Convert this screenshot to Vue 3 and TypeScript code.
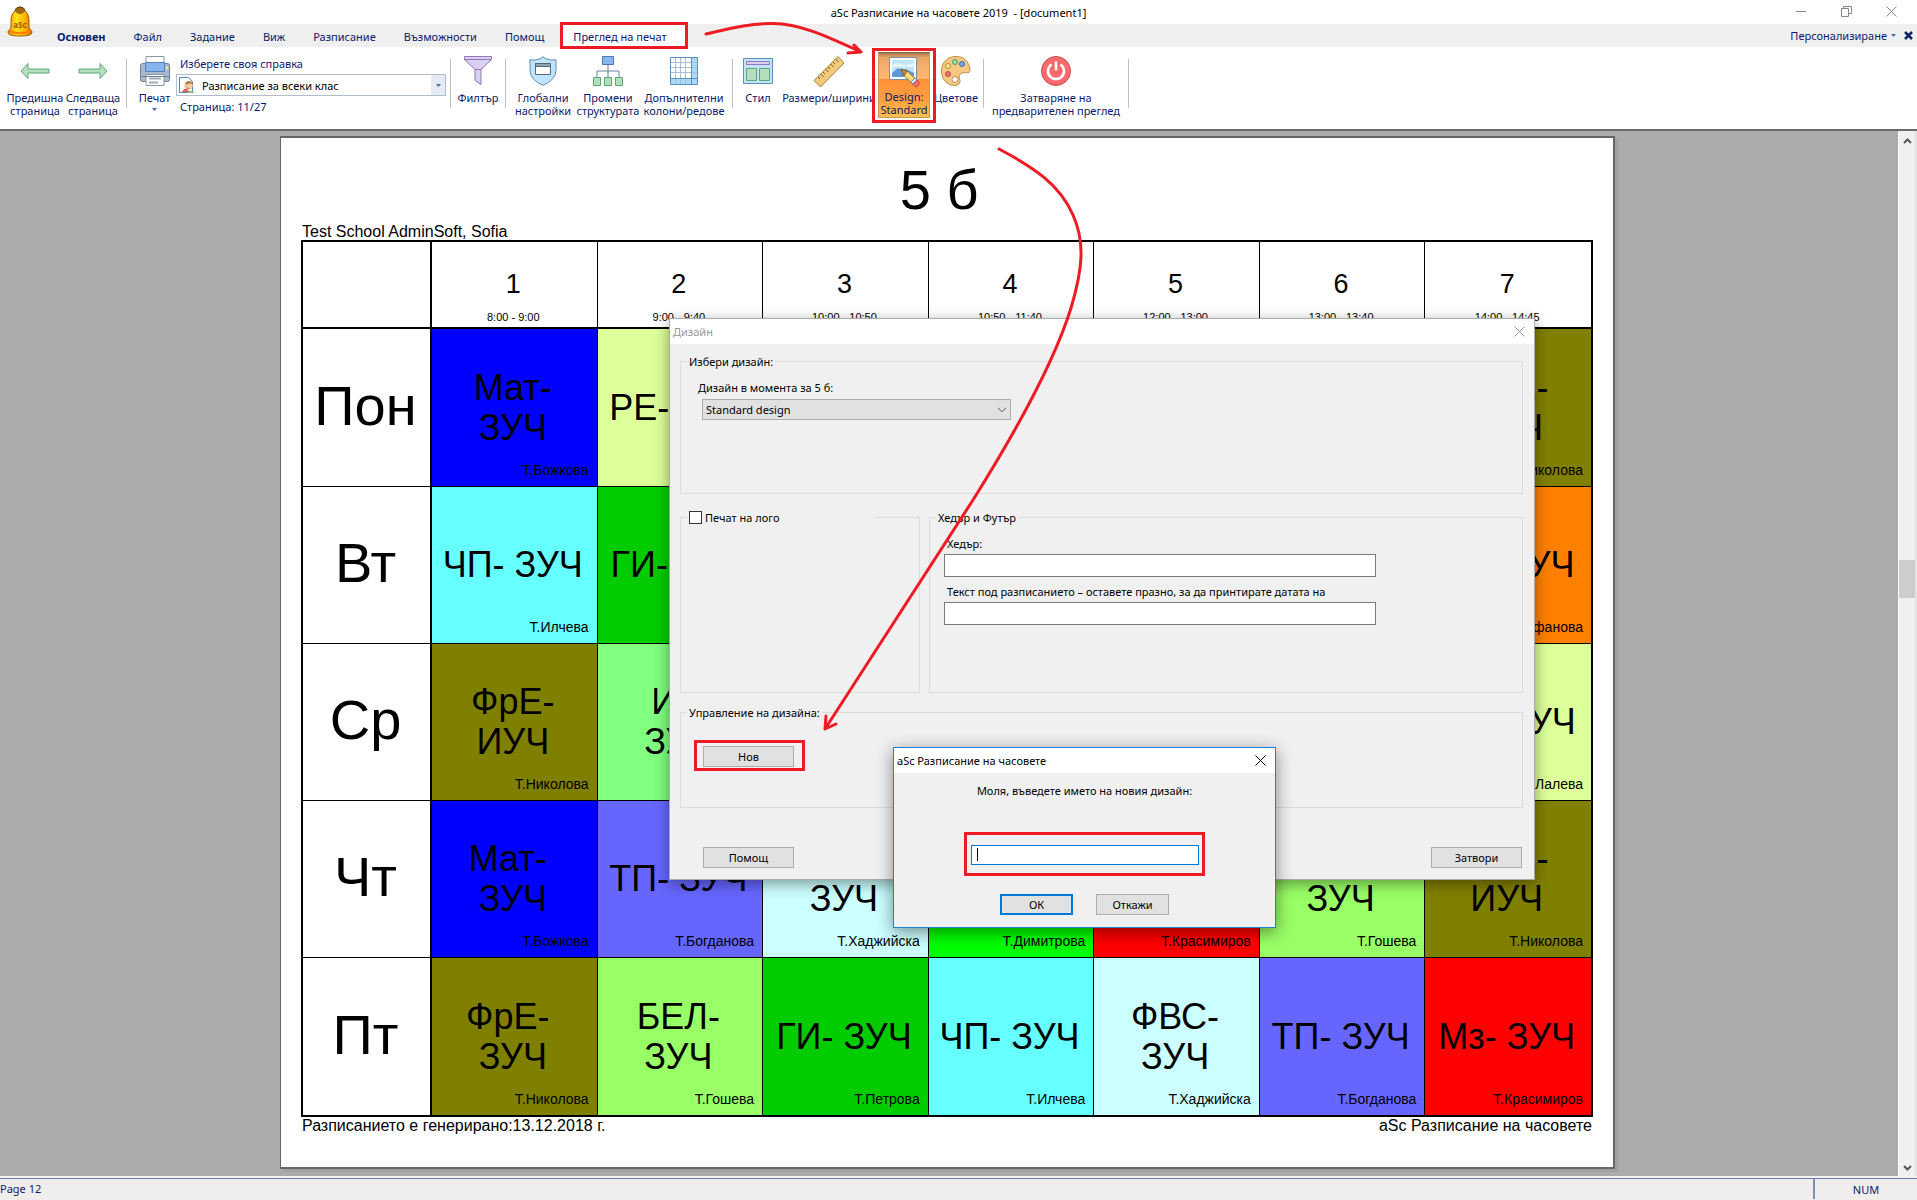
<script setup lang="ts">
import { ref } from 'vue'

interface Lesson {
  lines: string[]
  teacher: string
  color: string
}

interface Day {
  name: string
  lessons: Lesson[]
}

const menu = ['Основен', 'Файл', 'Задание', 'Виж', 'Разписание', 'Възможности', 'Помощ', 'Преглед на печат']

const periods = [
  { no: 1, time: '8:00 - 9:00' },
  { no: 2, time: '9:00 - 9:40' },
  { no: 3, time: '10:00 - 10:50' },
  { no: 4, time: '10:50 - 11:40' },
  { no: 5, time: '12:00 - 13:00' },
  { no: 6, time: '13:00 - 13:40' },
  { no: 7, time: '14:00 - 14:45' },
]

const lesson = (text: string, teacher: string, color: string): Lesson => ({
  lines: text.split('|'),
  teacher,
  color,
})
const free = (): Lesson => lesson('', '', '#ffffff')

const days: Day[] = [
  {
    name: 'Пон',
    lessons: [
      lesson('Мат-|ЗУЧ', 'Т.Божкова', '#0000ff'),
      lesson('РЕ- ЗУЧ', '', '#ddff99'),
      free(), free(), free(), free(),
      lesson('ФрЕ-|ИУЧ', 'Т.Николова', '#808000'),
    ],
  },
  {
    name: 'Вт',
    lessons: [
      lesson('ЧП- ЗУЧ', 'Т.Илчева', '#66ffff'),
      lesson('ГИ- ЗУЧ', '', '#00cc00'),
      free(), free(), free(), free(),
      lesson('ГИ- ЗУЧ', 'Т.Стефанова', '#ff8000'),
    ],
  },
  {
    name: 'Ср',
    lessons: [
      lesson('ФрЕ-|ИУЧ', 'Т.Николова', '#808000'),
      lesson('Из-|ЗУЧ', '', '#80ff80'),
      free(), free(), free(), free(),
      lesson('РЕ- ЗУЧ', 'Т.Лалева', '#ddff99'),
    ],
  },
  {
    name: 'Чт',
    lessons: [
      lesson('Мат-\u00a0|ЗУЧ', 'Т.Божкова', '#0000ff'),
      lesson('ТП- ЗУЧ', 'Т.Богданова', '#6666ff'),
      lesson('ФВС-|ЗУЧ', 'Т.Хаджийска', '#ccffff'),
      lesson('', 'Т.Димитрова', '#00ff00'),
      lesson('', 'Т.Красимиров', '#ff0000'),
      lesson('БЕЛ-|ЗУЧ', 'Т.Гошева', '#99ff66'),
      lesson('ФрЕ-|ИУЧ', 'Т.Николова', '#808000'),
    ],
  },
  {
    name: 'Пт',
    lessons: [
      lesson('ФрЕ-\u00a0|ЗУЧ', 'Т.Николова', '#808000'),
      lesson('БЕЛ-|ЗУЧ', 'Т.Гошева', '#99ff66'),
      lesson('ГИ- ЗУЧ', 'Т.Петрова', '#00cc00'),
      lesson('ЧП- ЗУЧ', 'Т.Илчева', '#66ffff'),
      lesson('ФВС-|ЗУЧ', 'Т.Хаджийска', '#ccffff'),
      lesson('ТП- ЗУЧ', 'Т.Богданова', '#6666ff'),
      lesson('Мз- ЗУЧ', 'Т.Красимиров', '#ff0000'),
    ],
  },
]

const printLogo = ref(false)
const header = ref('')
const footer = ref('')
const designName = ref('')
</script>

<template>
  <div class="app">
    <header class="titlebar">
      <svg class="bell" width="28" height="32" viewBox="0 0 28 32" aria-hidden="true">
        <defs>
          <linearGradient id="bellGold" x1="0" x2="1">
            <stop offset="0" stop-color="#f08c00" />
            <stop offset="0.35" stop-color="#ffe21a" />
            <stop offset="0.7" stop-color="#ffb400" />
            <stop offset="1" stop-color="#c86400" />
          </linearGradient>
        </defs>
        <ellipse cx="14" cy="28" rx="12" ry="2" fill="#bbb" />
        <ellipse cx="14" cy="5" rx="5" ry="4" fill="#8a5a10" stroke="#5c3a06" />
        <path d="M14 4C7 4 5 9 5 15v6c0 2-3 3-3 5 0 3 5 4 12 4s12-1 12-4c0-2-3-3-3-5v-6c0-6-2-11-9-11z" fill="url(#bellGold)" stroke="#a85a00" />
        <ellipse cx="14" cy="5" rx="4" ry="3" fill="#a06a14" />
        <path d="M3 25c6 3 16 3 22 0" fill="none" stroke="#ff7a00" stroke-width="2" />
        <text x="14" y="22" text-anchor="middle" font-size="8" font-weight="bold" fill="#a85a10">aSc</text>
      </svg>
      <h1>aSc Разписание на часовете 2019&nbsp; - [document1]</h1>
      <div class="winbuttons">
        <button type="button" aria-label="Minimize">
          <svg width="11" height="11" viewBox="0 0 11 11"><path d="M0 5.500h10" stroke="#888" /></svg>
        </button>
        <button type="button" aria-label="Restore">
          <svg width="11" height="11" viewBox="0 0 11 11" fill="none" stroke="#888"><path d="M.5 2.500h7v8h-7zM2.500 2.500v-2h8v7h-3" /></svg>
        </button>
        <button type="button" aria-label="Close">
          <svg width="11" height="11" viewBox="0 0 11 11"><path d="M.5.5l10 10M10.500.5l-10 10" stroke="#888" /></svg>
        </button>
      </div>
    </header>

    <nav class="menubar">
      <a v-for="(item, i) in menu" :key="item" href="#" :class="{ first: i === 0, current: i === menu.length - 1 }">{{ item }}</a>
      <button type="button" class="customize">
        Персонализиране<svg width="5" height="3" viewBox="0 0 5 3"><path d="M0 0h5L2.500 3z" fill="#3d72b8" /></svg>
      </button>
      <button type="button" class="close-doc" aria-label="Close document">
        <svg width="9" height="9" viewBox="0 0 9 9"><path d="M1 1l7 7M8 1L1 8" stroke="#0a246a" stroke-width="2.500" /></svg>
      </button>
    </nav>

    <div class="ribbon">
      <section class="group nav-group">
        <button type="button" class="tool w-page">
          <svg width="30" height="30" viewBox="0 0 30 30"><path d="M1 15L8 7.500V13H29V17H8V22.500Z" fill="#b5dfba" stroke="#5fa577" /></svg>
          <span>Предишна<br />страница</span>
        </button>
        <button type="button" class="tool w-page">
          <svg width="30" height="30" viewBox="0 0 30 30"><path d="M29 15L22 7.500V13H1V17H22V22.500Z" fill="#b5dfba" stroke="#5fa577" /></svg>
          <span>Следваща<br />страница</span>
        </button>
      </section>
      <section class="group print-group">
        <button type="button" class="tool w-print">
          <svg width="30" height="30" viewBox="0 0 30 30">
            <path d="M6 .5h18v10H6z" fill="#fff" stroke="#8a97a8" />
            <path d="M2.500 7.500H6v7h18v-7h3.500q2 0 2 2v14q0 2-2 2h-25q-2 0-2-2v-14q0-2 2-2z" fill="#a9b9cf" stroke="#6f8098" />
            <path d="M5.500 6.500h19v9h-19z" fill="#86b4ee" stroke="#5580b8" />
            <path d="M6 18.500h18v11H6z" fill="#fff" stroke="#8a97a8" />
            <path d="M1 20.500h28" stroke="#6f8098" />
            <path d="M9 22.500h12M9 26.500h9" stroke="#a0abba" stroke-width="2" />
            <circle cx="27" cy="12" r="1.500" fill="#ffe07a" />
          </svg>
          <span>Печат</span>
          <svg class="caret-down" width="5" height="3" viewBox="0 0 5 3"><path d="M0 0h5L2.500 3z" fill="#3d72b8" /></svg>
        </button>
        <div class="report">
          <label for="report">Изберете своя справка</label>
          <div class="combo">
            <svg width="16" height="16" viewBox="0 0 16 16" aria-hidden="true">
              <path d="M.5.500h9l4 4v11H.5z" fill="#fff" stroke="#4a86c8" />
              <circle cx="10" cy="8" r="4" fill="#b8804a" />
              <circle cx="7" cy="9" r="2" fill="#f0c8a0" />
              <circle cx="11" cy="9" r="2.500" fill="#f4d0a8" />
              <path d="M3 15q2-5 6-3l1 3z" fill="#e8605a" />
              <path d="M8 16q3-5 8 0z" fill="#8cc080" />
            </svg>
            <select id="report"><option>Разписание за всеки клас</option></select>
            <i><svg width="5" height="3" viewBox="0 0 5 3"><path d="M0 0h5L2.500 3z" fill="#3d72b8" /></svg></i>
          </div>
          <p>Страница: 11/27</p>
        </div>
      </section>
      <section class="group filter-group">
        <button type="button" class="tool w-filter">
          <svg width="30" height="30" viewBox="0 0 30 30"><path d="M1.500 .5h27v3L18 13.500V28.500l-6-4V13.500L1.500 3.500z" fill="#d9cff0" stroke="#9279b5" /><path d="M1.500 3.500h27M12 13.500h6" stroke="#9279b5" fill="none" /></svg>
          <span>Филтър</span>
        </button>
      </section>
      <section class="group settings-group">
        <button type="button" class="tool w-global">
          <svg width="30" height="30" viewBox="0 0 30 30">
            <path d="M15 .8l3 2q5 2 10 1v10q0 10-13 15.500Q2 24 2 14V3.800q5 1 10-1z" fill="#bfe4fb" stroke="#5f8fb8" />
            <path d="M7.500 7.500h15v11h-15z" fill="#fff" stroke="#55697d" />
            <path d="M7.500 7.500h15v3h-15z" fill="#8fa3b5" stroke="#55697d" />
          </svg>
          <span>Глобални<br />настройки</span>
        </button>
        <button type="button" class="tool w-structure">
          <svg width="30" height="30" viewBox="0 0 30 30">
            <path d="M15 8v14M4 22v-7h22v7" fill="none" stroke="#6b7f96" />
            <path d="M9.500 .5h11v8h-11z" fill="#86b4ee" stroke="#4c78b4" />
            <g fill="#b5dfba" stroke="#5fa577"><path d="M.5 21.500h7v8h-7z" /><path d="M11.500 21.500h7v8h-7z" /><path d="M22.500 21.500h7v8h-7z" /></g>
          </svg>
          <span>Промени<br />структурата</span>
        </button>
        <button type="button" class="tool w-columns">
          <svg width="30" height="30" viewBox="0 0 30 30">
            <path d="M1.500 1.500h27v27h-27z" fill="#fff" />
            <path d="M22.500 1.500h6v27h-27v-6h21z" fill="#a8dafb" />
            <path d="M6.500 1.500v27M11.500 1.500v27M16.500 1.500v27M1.500 6.500h27M1.500 11.500h27M1.500 16.500h27" stroke="#a9bed3" />
            <path d="M1.500 1.500h27v27h-27zM22.500 1.500v27M1.500 22.500h27" fill="none" stroke="#5f8fb8" />
          </svg>
          <span>Допълнителни<br />колони/редове</span>
        </button>
      </section>
      <section class="group design-group">
        <button type="button" class="tool w-style">
          <svg width="30" height="30" viewBox="0 0 30 30">
            <path d="M.5 2.500h29v25H.5z" fill="#bfe4fb" stroke="#5f8fb8" />
            <path d="M3.500 5.500h23v3h-23z" fill="#d9cff0" stroke="#9279b5" />
            <path d="M3.500 12.500h10v12h-10zM16.500 12.500h10v12h-10z" fill="#b5dfba" stroke="#5fa577" />
          </svg>
          <span>Стил</span>
        </button>
        <button type="button" class="tool w-size">
          <svg width="32" height="32" viewBox="0 0 32 32">
            <path d="M25 .5l6 6.500L7.500 31l-6.500-6.500z" fill="#f3ca7c" stroke="#a8803c" />
            <path d="M22.500 3l3 3M20 6l2 2M17.500 8l3 3M15 11l2 2M12.500 13l3 3M10 16l2 2M7.500 18l3 3M5 21l2 2" stroke="#7d5c22" />
          </svg>
          <span>Размери/ширини</span>
        </button>
        <div class="mark design-mark">
          <button type="button" class="tool active">
            <svg width="32" height="32" viewBox="0 0 32 32">
              <path d="M1.500 1.500h27v22h-27z" fill="#fff" stroke="#7890a8" />
              <path d="M4 4h22v17H4z" fill="#bfe4fb" />
              <path d="M4 9q5-3 9-1t13-1v4H4z" fill="#e4f4ff" />
              <path d="M4 17l6-5 4 2 4-1 8 4v4H4z" fill="#5f98d8" />
              <path d="M13 13l3 7 10 9 4-4L19 15z" fill="#f8dc78" stroke="#9a7a38" />
              <path d="M13 13l6 2-3 5z" fill="#c8903c" stroke="#805c20" />
              <path d="M23 26l4-4 2 2-4 4z" fill="#cfe4f6" stroke="#7890a8" />
              <path d="M25 28l4-4q3 2 2 4t-3 3q-2-1-3-3z" fill="#f07070" stroke="#b84848" />
            </svg>
            <span>Design:<br />Standard</span>
          </button>
        </div>
        <button type="button" class="tool w-colors">
          <svg width="30" height="30" viewBox="0 0 30 30">
            <path d="M15 .5C6 .5.500 7 .5 15S6 29.500 14 29.500c3 0 5-2 5-4 0-3-2-5 1-8 3-2 6 0 8-1 1-1 1-2 1-3C28 5 22 .5 15 .5z" fill="#f6c982" stroke="#b98a45" />
            <circle cx="7" cy="10" r="2.500" fill="#fbe88a" stroke="#a8903c" />
            <circle cx="14" cy="6" r="2.500" fill="#9ed8a4" stroke="#4c9a68" />
            <circle cx="21" cy="8" r="2.500" fill="#7aa8e8" stroke="#3c68a8" />
            <circle cx="7" cy="18" r="2.500" fill="#f07070" stroke="#b84848" />
            <circle cx="14" cy="23.500" r="3" fill="#fff" stroke="#b98a45" />
          </svg>
          <span>Цветове</span>
        </button>
      </section>
      <section class="group close-group">
        <button type="button" class="tool w-close">
          <svg width="30" height="30" viewBox="0 0 30 30">
            <circle cx="15" cy="15" r="14.500" fill="#f76b6e" stroke="#c84a50" />
            <path d="M10.500 8.500a8 8 0 1 0 9 0M15 5.500v9" fill="none" stroke="#fff" stroke-width="2.500" />
          </svg>
          <span>Затваряне на<br />предварителен преглед</span>
        </button>
      </section>
    </div>

    <main class="workspace">
      <article class="sheet">
        <h2>5 б&nbsp;</h2>
        <p class="school">Test School AdminSoft, Sofia</p>
        <table>
          <colgroup>
            <col class="day-col" />
            <col v-for="p in periods" :key="p.no" />
          </colgroup>
          <thead>
            <tr>
              <td></td>
              <th v-for="p in periods" :key="p.no" scope="col">
                <div class="period"><b>{{ p.no }}</b><small>{{ p.time }}</small></div>
              </th>
            </tr>
          </thead>
          <tbody>
            <tr v-for="day in days" :key="day.name">
              <th scope="row">{{ day.name }}</th>
              <td v-for="(l, i) in day.lessons" :key="i" :style="{ background: l.color }">
                <div class="lesson">
                  <div class="subject"><span v-for="line in l.lines" :key="line">{{ line }}</span></div>
                  <small>{{ l.teacher }}</small>
                </div>
              </td>
            </tr>
          </tbody>
        </table>
        <footer><span>Разписанието е генерирано:13.12.2018 г.</span><span>aSc Разписание на часовете</span></footer>
      </article>
      <div class="scrollbar">
        <svg width="9" height="6" viewBox="0 0 9 6"><path d="M1 5l3.500-3.500L8 5" fill="none" stroke="#555" stroke-width="2" /></svg>
        <div class="track"><div class="thumb"></div></div>
        <svg width="9" height="6" viewBox="0 0 9 6"><path d="M1 1l3.500 3.500L8 1" fill="none" stroke="#555" stroke-width="2" /></svg>
      </div>
    </main>

    <footer class="status"><span>Page 12</span><span class="num">NUM</span></footer>

    <section class="dialog design-dialog" role="dialog" aria-label="Дизайн">
      <div class="caption">
        <h3>Дизайн</h3>
        <button type="button" aria-label="Close">
          <svg width="11" height="11" viewBox="0 0 11 11"><path d="M.5.5l10 10M10.500.5l-10 10" stroke="currentColor" /></svg>
        </button>
      </div>
      <div class="body">
        <fieldset class="choose">
          <legend>Избери дизайн:</legend>
          <div class="fields">
            <label for="design">Дизайн в момента за 5 б:</label>
            <div class="dropdown">
              <select id="design"><option>Standard design</option></select>
              <svg width="10" height="6" viewBox="0 0 10 6"><path d="M1 .8l4 4 4-4" fill="none" stroke="#555" /></svg>
            </div>
          </div>
        </fieldset>
        <div class="pair">
          <fieldset class="logo">
            <legend><input id="logo" v-model="printLogo" type="checkbox" /><label for="logo">Печат на лого</label></legend>
          </fieldset>
          <fieldset class="headfoot">
            <legend>Хедър и Футър</legend>
            <div class="fields">
              <label for="head">Хедър:</label>
              <input id="head" v-model="header" type="text" />
              <label for="foot">Текст под разписанието – оставете празно, за да принтирате датата на</label>
              <input id="foot" v-model="footer" type="text" />
            </div>
          </fieldset>
        </div>
        <fieldset class="manage">
          <legend>Управление на дизайна:</legend>
          <div class="new-row"><div class="mark new-mark"><button type="button" class="push">Нов</button></div></div>
        </fieldset>
        <div class="actions">
          <button type="button" class="push">Помощ</button>
          <button type="button" class="push">Затвори</button>
        </div>
      </div>
    </section>

    <section class="dialog name-dialog" role="dialog" aria-label="aSc Разписание на часовете">
      <div class="caption">
        <h3>aSc Разписание на часовете</h3>
        <button type="button" aria-label="Close">
          <svg width="11" height="11" viewBox="0 0 11 11"><path d="M.5.5l10 10M10.500.5l-10 10" stroke="currentColor" /></svg>
        </button>
      </div>
      <div class="body">
        <label for="name">Моля, въведете името на новия дизайн:</label>
        <div class="mark name-mark">
          <input id="name" v-model="designName" type="text" />
          <i class="text-caret"></i>
        </div>
        <div class="answers">
          <button type="button" class="push ok">ОК</button>
          <button type="button" class="push">Откажи</button>
        </div>
      </div>
    </section>

    <svg class="arrows" width="1917" height="1200" viewBox="0 0 1917 1200" aria-hidden="true">
      <g fill="none" stroke="#ed1c24" stroke-width="3" stroke-linecap="round" stroke-linejoin="round">
        <path d="M706 34C728 29 750 23 773 23.500C802 24 828 37 861 52M854 45l7 7l-13 1" />
        <path d="M999 149C1035 168 1060 185 1073 215C1085 242 1083 268 1071 308C1056 356 1020 425 973 500L825 729M826 716l-1 13l11-5" />
      </g>
    </svg>
  </div>
</template>

<style>
body {
  margin: 0;
}
</style>

<style scoped>
* {
  box-sizing: border-box;
}
.app {
  position: relative;
  display: flex;
  flex-direction: column;
  min-height: 100vh;
  overflow: hidden;
  background: #fff;
  color: #000;
  font: 11px/14px "Noto Sans", "Open Sans", sans-serif;
}
h1, h2, h3, p {
  margin: 0;
  font-weight: normal;
}
button, input, select {
  margin: 0;
  padding: 0;
  border: 0;
  border-radius: 0;
  background: none;
  color: inherit;
  font: inherit;
}
select {
  appearance: none;
}
svg {
  display: block;
  flex: none;
}

.titlebar {
  position: relative;
  display: flex;
  align-items: center;
  justify-content: center;
  height: 24px;
  padding-top: 2px;
}
.titlebar h1 {
  font-size: 11px;
}
.bell {
  position: absolute;
  left: 6px;
  top: 6px;
  z-index: 1;
}
.winbuttons {
  position: absolute;
  right: 20px;
  top: 6px;
  display: flex;
  gap: 34px;
}

.menubar {
  display: flex;
  align-items: stretch;
  height: 23px;
  padding-left: 43px;
  background: #efefef;
  color: #0a1a6a;
}
.menubar a {
  padding: 0 14px;
  color: inherit;
  line-height: 26px;
  text-decoration: none;
}
.menubar .first {
  font-weight: bold;
}
.menubar .current {
  margin-left: 4px;
  padding: 0 19px 0 11px;
  background: #fff;
  outline: 3px solid #ed1c24;
  outline-offset: -1px;
}
.customize {
  display: flex;
  gap: 4px;
  align-items: center;
  margin-left: auto;
}
.close-doc {
  padding: 0 4px 0 8px;
}

.ribbon {
  display: flex;
  align-items: flex-start;
  height: 82px;
  padding-left: 6px;
  color: #0a1a6a;
  line-height: 13px;
}
.group {
  position: relative;
  display: flex;
  align-items: flex-start;
  height: 82px;
}
.group::after {
  content: "";
  width: 1px;
  height: 49px;
  margin: 12px 0 0 4px;
  background: #c0c0c0;
}
.tool {
  display: flex;
  flex-direction: column;
  align-items: center;
  height: 72px;
  padding-top: 9px;
  white-space: nowrap;
}
.tool span {
  margin-top: auto;
  height: 28px;
}
.tool svg {
  margin-bottom: -6px;
}
.tool .caret-down {
  position: absolute;
  top: 61px;
}
.w-page {
  width: 58px;
}
.print-group {
  padding-left: 10px;
}
.w-print {
  width: 35px;
}
.filter-group {
  padding-left: 2px;
}
.filter-group::after {
  margin-left: 2px;
}
.w-filter {
  width: 50px;
}
.settings-group {
  padding-left: 4px;
}
.w-global {
  width: 66px;
}
.w-structure {
  width: 64px;
}
.w-columns {
  width: 88px;
}
.w-style {
  width: 50px;
}
.w-size {
  width: 92px;
}
.w-colors {
  width: 46px;
}
.close-group {
  padding-left: 4px;
}
.w-close {
  width: 136px;
}
.report {
  width: 270px;
  margin-left: 4px;
  padding-top: 9px;
}
.report label, .report p {
  display: block;
  padding-left: 4px;
  line-height: 15px;
}
.combo {
  display: flex;
  align-items: center;
  height: 22px;
  margin: 3px 0;
  padding-left: 2px;
  border: 1px solid #b0bed0;
  color: #000;
}
.combo select {
  flex: 1;
  padding-left: 7px;
}
.combo i {
  display: flex;
  align-items: center;
  justify-content: center;
  width: 14px;
  height: 20px;
  background: #e6ebf3;
}
.mark {
  position: relative;
  z-index: 1;
  outline: 3px solid #ed1c24;
}
.design-mark {
  width: 58px;
  height: 69px;
  margin-top: 4px;
  padding: 1px 3px;
  background: #fff;
}
.tool.active {
  width: 52px;
  height: 66px;
  padding-top: 3px;
  border: 1px solid #c49a58;
  border-top-color: #7a6040;
  background: linear-gradient(#a87c4c, #eda868 8%, #ffb972 40%, #ff913a 41%, #ffa040 75%, #ffc050);
}
.tool.active span {
  height: 27px;
}

.workspace {
  display: flex;
  flex: 1;
  border-top: 2px solid #6a6a6a;
  background: #ababab;
}
.sheet {
  flex: 1;
  margin: 5px 283px 7px 280px;
  padding: 20px 20px 0;
  border: solid #666;
  border-width: 2px 2px 2px 1px;
  background: #fff;
  box-shadow: 3px 3px 0 #a0a0a0;
  font-family: "Liberation Sans", Arial, sans-serif;
}
.sheet h2 {
  font-size: 56px;
  line-height: 64px;
  text-align: center;
}
.school {
  margin-bottom: -2px;
  padding-left: 1px;
  font-size: 16px;
  line-height: 20px;
}
table {
  width: 100%;
  border: 2px solid #000;
  border-spacing: 0;
  table-layout: fixed;
}
.day-col {
  width: 129px;
}
th, td {
  padding: 0;
  border: solid #000;
  border-width: 0 1px 1px 0;
  font-weight: normal;
}
thead tr {
  height: 87px;
}
thead th, thead td {
  border-bottom-width: 2px;
}
tr > :first-child {
  border-right-width: 2px;
}
tr > :last-child {
  border-right-width: 0;
}
tbody tr {
  height: 157px;
}
tbody tr:first-child {
  height: 158px;
}
tbody tr:last-child > * {
  border-bottom-width: 0;
}
tbody th {
  padding: 0 2px 4px 0;
  font-size: 56px;
  line-height: 64px;
}
.period {
  display: flex;
  flex-direction: column;
  align-items: center;
  padding: 20px 2px 2px 0;
}
.period b {
  font-size: 27px;
  font-weight: normal;
  line-height: 40px;
}
.period small {
  margin-top: 6px;
  font-size: 11px;
  line-height: 14px;
}
.lesson {
  display: flex;
  flex-direction: column;
  height: 156px;
  padding-top: 24px;
}
.subject {
  display: flex;
  flex: 1;
  flex-direction: column;
  align-items: center;
  justify-content: center;
  padding-right: 3px;
  font-size: 36px;
  line-height: 40px;
  white-space: nowrap;
}
.lesson small {
  height: 24px;
  padding-right: 8px;
  font-size: 14px;
  line-height: 17px;
  text-align: right;
}
.sheet footer {
  display: flex;
  justify-content: space-between;
  padding: 0 1px;
  font-size: 16px;
  line-height: 18px;
}

.scrollbar {
  display: flex;
  flex-direction: column;
  align-items: center;
  width: 19px;
  padding: 7px 0 5px;
  border-left: 1px solid #fff;
  border-right: 2px solid #e4e4e4;
  background: #f0f0f0;
}
.track {
  flex: 1;
  width: 100%;
  padding-top: 416px;
}
.thumb {
  height: 38px;
  background: #cdcdcd;
}

.status {
  display: flex;
  align-items: center;
  height: 24px;
  border-top: 2px solid #f4f4f4;
  background: #f0eded;
  color: #0a1a6a;
  box-shadow: inset 0 1px #6c7ea8;
}
.num {
  width: 104px;
  height: 20px;
  margin-left: auto;
  border-left: 2px solid #8090b4;
  line-height: 22px;
  text-align: center;
}

.dialog {
  position: absolute;
  background: #f0f0f0;
}
.caption {
  display: flex;
  align-items: center;
  justify-content: space-between;
  height: 25px;
  padding: 0 9px 0 3px;
  background: #fff;
}
.caption h3 {
  font-size: 11px;
}
.design-dialog {
  left: 669px;
  top: 318px;
  width: 866px;
  border: 1px solid #aaa;
  box-shadow: 0 4px 14px rgba(0, 0, 0, 0.4);
}
.design-dialog .caption {
  color: #999;
}
.design-dialog .body {
  padding: 10px 11px 11px 10px;
}
fieldset {
  min-width: 0;
  margin: 0;
  padding: 0 6px;
  border: 1px solid #dcdcdc;
}
legend {
  padding: 0 2px;
  line-height: 15px;
}
.choose {
  min-height: 140px;
}
.fields {
  display: flex;
  flex-direction: column;
  align-items: flex-start;
  padding: 12px 11px 0;
}
.dropdown {
  position: relative;
  margin: 4px 0 0 4px;
}
.dropdown select {
  display: block;
  width: 309px;
  height: 21px;
  padding-left: 3px;
  border: 1px solid #adadad;
  background: #e1e1e1;
}
.dropdown svg {
  position: absolute;
  right: 4px;
  top: 8px;
}
.pair {
  display: flex;
  gap: 9px;
  margin-top: 16px;
}
.pair fieldset {
  min-height: 183px;
}
.logo {
  width: 240px;
}
.logo legend {
  display: flex;
  gap: 3px;
  align-items: center;
  width: 188px;
}
.logo input {
  appearance: none;
  width: 13px;
  height: 13px;
  border: 1px solid #333;
  background: #fff;
}
.headfoot {
  flex: 1;
}
.headfoot input {
  width: 432px;
  height: 23px;
  margin: 3px 0 8px -3px;
  border: 1px solid #7a7a7a;
  background: #fff;
}
.manage {
  min-height: 103px;
  margin-top: 12px;
}
.new-row {
  display: flex;
  padding: 23px 0 0 10px;
}
.new-mark {
  padding: 3px 8px 1px 6px;
}
.push {
  display: block;
  width: 91px;
  height: 21px;
  border: 1px solid #adadad;
  background: #e1e1e1;
}
.actions {
  display: flex;
  justify-content: space-between;
  margin-top: 39px;
  padding: 0 1px 0 23px;
}

.name-dialog {
  left: 893px;
  top: 747px;
  width: 383px;
  border: 1px solid #1883d7;
  box-shadow: 0 4px 16px rgba(0, 0, 0, 0.45);
}
.name-dialog .body {
  display: flex;
  flex-direction: column;
  align-items: center;
  height: 154px;
  padding-top: 11px;
}
.name-mark {
  margin-top: 37px;
  padding: 10px 3px 8px 4px;
}
.name-mark input {
  display: block;
  width: 228px;
  height: 20px;
  padding: 0 4px;
  border: 1px solid #0078d7;
  background: #fff;
}
.text-caret {
  position: absolute;
  left: 10px;
  top: 13px;
  width: 1px;
  height: 13px;
  background: #000;
}
.answers {
  display: flex;
  gap: 23px;
  margin-top: 21px;
}
.answers .push {
  width: 73px;
}
.answers .ok {
  border: 2px solid #0078d7;
}
.arrows {
  position: absolute;
  left: 0;
  top: 0;
  z-index: 2;
  pointer-events: none;
}
</style>
